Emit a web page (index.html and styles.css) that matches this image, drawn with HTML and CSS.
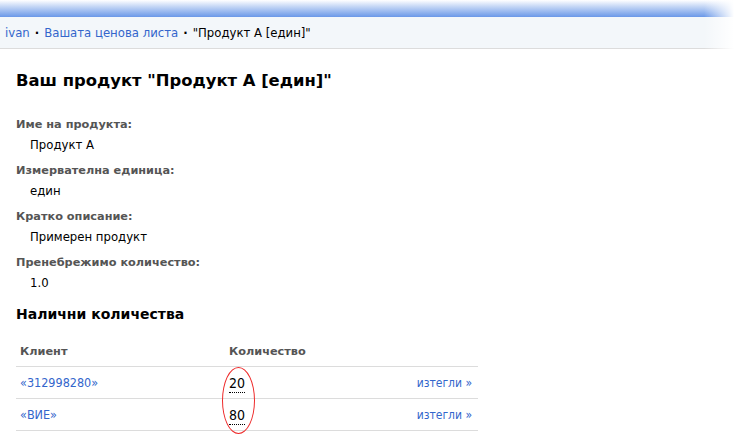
FILE: index.html
```html
<!DOCTYPE html>
<html lang="bg">
<head>
<meta charset="utf-8">
<title>Ваш продукт</title>
<link rel="stylesheet" href="styles.css">
</head>
<body>
<div class="page">
  <div class="topband"></div>
  <nav class="crumbs">
    <a href="#">ivan</a><span class="sep">·</span><a href="#">Вашата ценова листа</a><span class="sep">·</span><span class="current">"Продукт А [един]"</span>
  </nav>
  <main class="content">
    <h1 class="title">Ваш продукт "Продукт А [един]"</h1>
    <dl class="props">
      <dt>Име на продукта:</dt>
      <dd>Продукт А</dd>
      <dt>Измервателна единица:</dt>
      <dd>един</dd>
      <dt>Кратко описание:</dt>
      <dd>Примерен продукт</dd>
      <dt>Пренебрежимо количество:</dt>
      <dd>1.0</dd>
    </dl>
    <h2 class="subtitle">Налични количества</h2>
    <div class="tablewrap">
      <table class="qty">
        <thead>
          <tr><th class="c-client">Клиент</th><th class="c-qty">Количество</th><th class="c-act"></th></tr>
        </thead>
        <tbody>
          <tr><td><a href="#">«312998280»</a></td><td><span class="num">20</span></td><td class="act"><a href="#">изтегли »</a></td></tr>
          <tr><td><a href="#">«ВИЕ»</a></td><td><span class="num">80</span></td><td class="act"><a href="#">изтегли »</a></td></tr>
        </tbody>
      </table>
      <div class="ring"></div>
    </div>
  </main>
  <div class="fade-right"></div>
</div>
</body>
</html>
```
FILE: styles.css
```css
html, body {
  margin: 0;
  padding: 0;
  background: #fff;
}
body {
  font-family: "DejaVu Sans Condensed", "DejaVu Sans", Verdana, sans-serif;
  color: #000;
  width: 734px;
  height: 445px;
  overflow: hidden;
}
a { color: #3366cc; text-decoration: none; }
.page {
  position: relative;
  height: 445px;
}
.topband {
  height: 17px;
  background: linear-gradient(to bottom, rgba(255,255,255,0) 0%, #c2d5f5 40%, #6a98e8 100%);
}
.crumbs {
  height: 32px;
  box-sizing: border-box;
  background: #f3f7fa;
  border-bottom: 1px solid #dcdcdc;
  display: flex;
  align-items: center;
  padding-left: 5px;
  font-size: 13px;
}
.crumbs .sep {
  margin: 0 5px;
  color: #000;
  font-weight: bold;
}
.crumbs .current { color: #000; }
.content {
  padding: 0 16px;
}
.title {
  margin: 21px 0 0;
  font-family: "DejaVu Sans", Verdana, sans-serif;
  font-size: 16.4px;
  font-weight: bold;
  line-height: 22px;
}
.props {
  margin: 23px 0 0;
}
.props dt {
  font-family: "DejaVu Sans", Verdana, sans-serif;
  font-size: 11.3px;
  font-weight: bold;
  color: #555;
  line-height: 20px;
}
.props dd {
  margin: 0 0 6px 14px;
  font-size: 13px;
  line-height: 20px;
}
.subtitle {
  margin: 11px 0 0;
  font-family: "DejaVu Sans", Verdana, sans-serif;
  font-size: 14px;
  font-weight: bold;
  line-height: 20px;
}
.tablewrap {
  position: relative;
  width: 462px;
  margin-top: 12px;
}
.qty {
  width: 462px;
  border-collapse: collapse;
  font-size: 12.5px;
}
.qty th {
  text-align: left;
  font-family: "DejaVu Sans", Verdana, sans-serif;
  font-size: 11.3px;
  font-weight: bold;
  color: #555;
  height: 30px;
  padding: 0 0 0 4px;
  border-bottom: 1px solid #dcdcdc;
}
.qty td {
  height: 31px;
  padding: 0 0 0 4px;
  border-bottom: 1px solid #dcdcdc;
}
.qty .c-client { width: 205px; }
.qty .c-qty { width: 150px; }
.qty td.act {
  text-align: right;
  padding-right: 6px;
  font-size: 12px;
}
.num {
  display: inline-block;
  border-bottom: 1px dotted #000;
  font-size: 14px;
  line-height: 16px;
  padding-bottom: 1px;
  margin-top: 2px;
}
.ring {
  position: absolute;
  left: 206px;
  top: 31px;
  width: 33px;
  height: 67px;
  border: 1.3px solid #ee2a2a;
  border-radius: 50%;
  box-sizing: border-box;
}
.fade-right {
  position: absolute;
  right: 0;
  top: 0;
  width: 30px;
  height: 60px;
  background: linear-gradient(to right, rgba(255,255,255,0), #fff);
}
```
